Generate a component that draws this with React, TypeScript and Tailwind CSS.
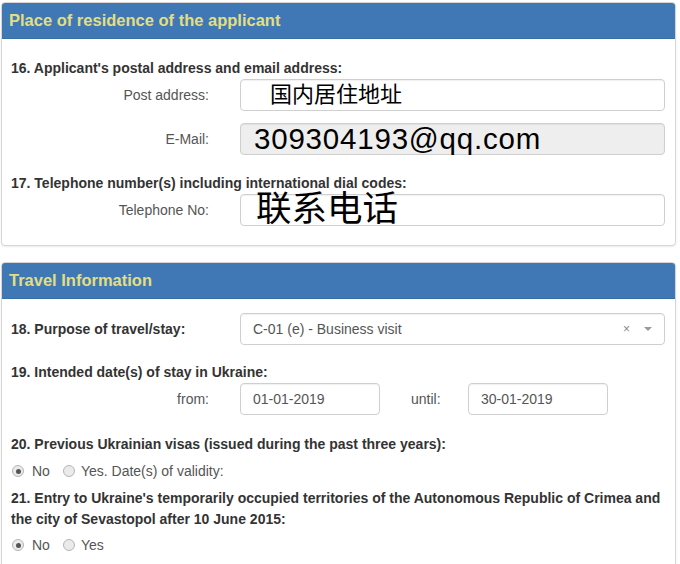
import React from "react";

const font = { fontFamily: '"Liberation Sans", Arial, "Noto Sans CJK SC", sans-serif' };

function Panel({ title, children, className = "" }: { title: string; children: React.ReactNode; className?: string }) {
  return (
    <div className={`w-[675px] rounded-[4px] border border-[#d6d6d6] bg-white shadow-[0_1px_2px_rgba(0,0,0,0.08)] overflow-hidden ${className}`}>
      <div className="h-[36px] bg-[#3f78b4] border-b border-[#3a6fa6] flex items-center pl-[7px]">
        <span className="text-[16.5px] font-bold text-[#e3de82]">{title}</span>
      </div>
      {children}
    </div>
  );
}

function FieldRow({ label, children }: { label: string; children: React.ReactNode }) {
  return (
    <div className="flex items-center">
      <div className="w-[198px] text-right text-[14px] text-[#555]">{label}</div>
      <div className="ml-[31px]">{children}</div>
    </div>
  );
}

function Box({ children, w = "w-[425px]", gray = false, className = "" }: { children?: React.ReactNode; w?: string; gray?: boolean; className?: string }) {
  return (
    <div
      className={`${w} h-[32px] rounded-[4px] border border-[#cfcfcf] shadow-[inset_0_1px_1px_rgba(0,0,0,0.06)] flex items-center px-[12px] ${
        gray ? "bg-[#eeeeee]" : "bg-white"
      } ${className}`}
    >
      {children}
    </div>
  );
}

function Radio({ checked }: { checked?: boolean }) {
  return (
    <span className="w-[12px] h-[12px] rounded-full border border-[#b5b5b5] bg-[#eaeaea] flex items-center justify-center">
      {checked && <span className="w-[5px] h-[5px] rounded-full bg-[#555]" />}
    </span>
  );
}

function Heading({ children, className = "" }: { children: React.ReactNode; className?: string }) {
  return <div className={`text-[14px] font-bold text-[#333] leading-[18px] ${className}`}>{children}</div>;
}

export default function App() {
  return (
    <div style={font} className="w-[680px] h-[564px] bg-white pt-[2px] pl-[1px] overflow-hidden">
      <Panel title="Place of residence of the applicant">
        <div className="pl-[9px] pt-[20px] pb-[19px]">
          <Heading>16. Applicant's postal address and email address:</Heading>
          <div className="mt-[2px]">
            <FieldRow label="Post address:">
              <Box className="pl-[29px]">
                <span className="text-[22px] text-black leading-none">国内居住地址</span>
              </Box>
            </FieldRow>
          </div>
          <div className="mt-[12px]">
            <FieldRow label="E-Mail:">
              <Box gray className="pl-[13px]">
                <span className="text-[29.5px] text-black leading-none tracking-[0.8px]">309304193@qq.com</span>
              </Box>
            </FieldRow>
          </div>
          <Heading className="mt-[19px]">17. Telephone number(s) including international dial codes:</Heading>
          <div className="mt-[2px]">
            <FieldRow label="Telephone No:">
              <Box className="pl-[15px]">
                <span className="text-[35.5px] text-black leading-none">联系电话</span>
              </Box>
            </FieldRow>
          </div>
        </div>
      </Panel>

      <Panel title="Travel Information" className="mt-[16px] h-[320px]">
        <div className="pl-[9px] pt-[14px]">
          <div className="flex items-center">
            <div className="w-[229px] text-[14px] font-bold text-[#333]">18. Purpose of travel/stay:</div>
            <Box>
              <span className="flex-1 text-[14px] text-[#555]">C-01 (e) - Business visit</span>
              <span className="text-[12px] text-[#888] mr-[14px]">×</span>
              <span className="w-0 h-0 border-l-[4px] border-r-[4px] border-t-[4px] border-l-transparent border-r-transparent border-t-[#999]" />
            </Box>
          </div>
          <Heading className="mt-[18px]">19. Intended date(s) of stay in Ukraine:</Heading>
          <div className="mt-[2px] flex items-center">
            <FieldRow label="from:">
              <Box w="w-[140px]">
                <span className="text-[14px] text-[#555]">01-01-2019</span>
              </Box>
            </FieldRow>
            <span className="ml-[31px] w-[57px] text-[14px] text-[#555]">until:</span>
            <Box w="w-[140px]">
              <span className="text-[14px] text-[#555]">30-01-2019</span>
            </Box>
          </div>
          <Heading className="mt-[20px]">20. Previous Ukrainian visas (issued during the past three years):</Heading>
          <div className="mt-[9px] h-[18px] flex items-center text-[14px] text-[#555]">
            <span className="ml-[1px]"><Radio checked /></span>
            <span className="ml-[8px]">No</span>
            <span className="ml-[13px]"><Radio /></span>
            <span className="ml-[6px]">Yes. Date(s) of validity:</span>
          </div>
          <div className="mt-[8px] text-[14px] font-bold text-[#333] leading-[21px]">
            21. Entry to Ukraine's temporarily occupied territories of the Autonomous Republic of Crimea and
            <br />
            the city of Sevastopol after 10 June 2015:
          </div>
          <div className="mt-[6px] h-[18px] flex items-center text-[14px] text-[#555]">
            <span className="ml-[1px]"><Radio checked /></span>
            <span className="ml-[8px]">No</span>
            <span className="ml-[13px]"><Radio /></span>
            <span className="ml-[6px]">Yes</span>
          </div>
        </div>
      </Panel>
    </div>
  );
}
